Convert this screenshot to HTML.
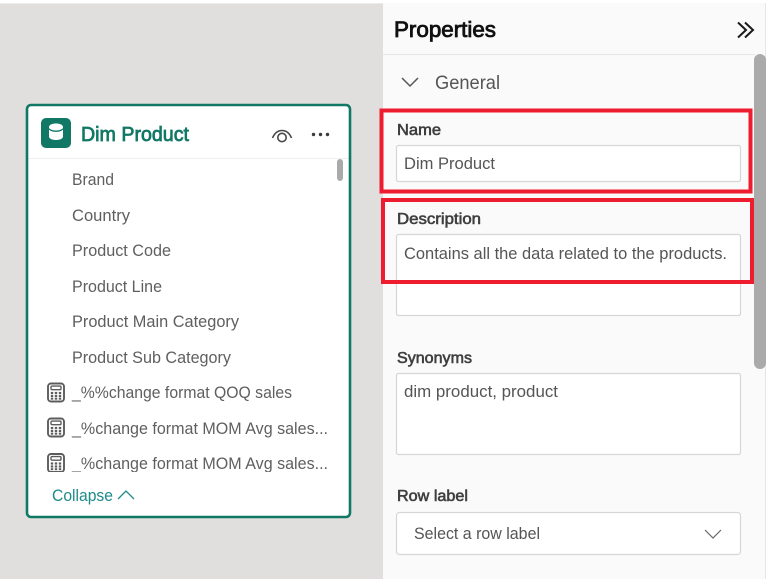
<!DOCTYPE html>
<html><head><meta charset="utf-8"><style>
html,body{margin:0;padding:0;background:#e1dfdd}
svg{display:block}
text{font-family:"Liberation Sans",sans-serif}
.i{font-size:16.5px;fill:#5f5f5f}
.l{font-size:16px;fill:#3f3f3f;stroke:#3f3f3f;stroke-width:.6px}
.v{font-size:16.5px;fill:#555}
.b{fill:#fff;stroke:#d6d6d6;stroke-width:1.2}
</style></head><body>
<svg width="768" height="579" viewBox="0 0 768 579" xmlns="http://www.w3.org/2000/svg">
<defs>
<g id="c"><rect x="1" y="1" width="16" height="18" rx="3" fill="#fff" stroke="#5c5c5c" stroke-width="1.900"/><rect x="4" y="3.600" width="10" height="3.600" rx="1" fill="none" stroke="#5c5c5c" stroke-width="1.400"/><g fill="#5c5c5c"><rect x="3.800" y="9.400" width="2.400" height="2.200"/><rect x="7.800" y="9.400" width="2.400" height="2.200"/><rect x="11.800" y="9.400" width="2.400" height="2.200"/><rect x="3.800" y="12.400" width="2.400" height="2.200"/><rect x="7.800" y="12.400" width="2.400" height="2.200"/><rect x="11.800" y="12.400" width="2.400" height="2.200"/><rect x="3.800" y="15.200" width="2.400" height="2"/><rect x="7.800" y="15.200" width="2.400" height="2"/><rect x="11.800" y="15.200" width="2.400" height="2"/></g></g>
</defs>
<rect width="768" height="579" fill="#e1dfdd"/>
<rect width="768" height="3" fill="#fff"/>
<rect y="3" width="768" height="1" fill="#ececec"/>
<!-- panel -->
<rect x="383" y="3" width="382" height="576" fill="#fafafa"/>
<rect x="765" y="3" width="1" height="576" fill="#e6e6e6"/>
<rect x="766" y="3" width="2" height="576" fill="#fff"/>
<rect x="383" y="54" width="372" height="1" fill="#e6e6e6"/>
<text x="394" y="37" font-size="22.500" fill="#111" stroke="#111" stroke-width=".85" textLength="102" lengthAdjust="spacingAndGlyphs">Properties</text>
<path d="M738 22.500l8 7.500-8 7.500M745 22.500l8 7.500-8 7.500" fill="none" stroke="#1a1a1a" stroke-width="2"/>
<rect x="754" y="54" width="12" height="315" rx="6" fill="#aaa"/>
<path d="M402 78l8 8 8-8" fill="none" stroke="#555" stroke-width="1.500"/>
<text x="435" y="89" font-size="19.500" fill="#555" textLength="65" lengthAdjust="spacingAndGlyphs">General</text>
<!-- fields -->
<text class="l" x="397" y="135" textLength="44" lengthAdjust="spacingAndGlyphs">Name</text>
<rect class="b" x="396.500" y="145.500" width="344" height="36" rx="2"/>
<text class="v" x="404" y="169" textLength="91" lengthAdjust="spacingAndGlyphs">Dim Product</text>
<text class="l" x="397" y="224" textLength="84" lengthAdjust="spacingAndGlyphs">Description</text>
<rect class="b" x="396.500" y="234.500" width="344" height="81" rx="2"/>
<text class="v" x="404" y="259" textLength="323" lengthAdjust="spacingAndGlyphs">Contains all the data related to the products.</text>
<text class="l" x="397" y="363" textLength="75" lengthAdjust="spacingAndGlyphs">Synonyms</text>
<rect class="b" x="396.500" y="373.500" width="344" height="81" rx="2"/>
<text class="v" x="404" y="397" textLength="154" lengthAdjust="spacingAndGlyphs">dim product, product</text>
<text class="l" x="397" y="501" textLength="71" lengthAdjust="spacingAndGlyphs">Row label</text>
<rect class="b" x="396.500" y="512.500" width="344" height="42" rx="3"/>
<text class="v" x="414" y="539" textLength="126" lengthAdjust="spacingAndGlyphs">Select a row label</text>
<path d="M705 530l8 8 8-8" fill="none" stroke="#666" stroke-width="1.200"/>
<!-- red -->
<rect x="381.500" y="110.500" width="369" height="81" fill="none" stroke="#ed1c2e" stroke-width="4"/>
<rect x="383" y="200" width="369" height="82" fill="none" stroke="#ed1c2e" stroke-width="4"/>
<!-- card -->
<rect x="27" y="105" width="323" height="412" rx="4" fill="#fff" stroke="#117865" stroke-width="2.600"/>
<rect x="28.500" y="158" width="320" height="1" fill="#efefef"/>
<rect x="41" y="118" width="30" height="30" rx="5" fill="#117865"/>
<path d="M49 127c0-2.300 3.500-3.500 7-3.500s7 1.200 7 3.500v9.500c0 2.300-3.500 3.500-7 3.500s-7-1.200-7-3.500z" fill="#fff"/>
<path d="M49 128.800c1.500 1.600 4 2.400 7 2.400s5.500-.8 7-2.400" fill="none" stroke="#117865" stroke-width="1.400"/>
<text x="81" y="141" font-size="20" fill="#117865" stroke="#117865" stroke-width=".75" textLength="108" lengthAdjust="spacingAndGlyphs">Dim Product</text>
<path d="M272.500 138c2-4.800 5.500-7.500 9.500-7.500s7.500 2.700 9.500 7.500" fill="none" stroke="#484848" stroke-width="1.600"/>
<circle cx="282" cy="137.500" r="4.200" fill="none" stroke="#484848" stroke-width="1.600"/>
<g fill="#3c3c3c"><circle cx="313.500" cy="134.500" r="1.700"/><circle cx="320.500" cy="134.500" r="1.700"/><circle cx="327.500" cy="134.500" r="1.700"/></g>
<rect x="337" y="159" width="6" height="22" rx="3" fill="#aaa"/>
<text class="i" x="72" y="185" textLength="42" lengthAdjust="spacingAndGlyphs">Brand</text>
<text class="i" x="72" y="221" textLength="58" lengthAdjust="spacingAndGlyphs">Country</text>
<text class="i" x="72" y="256" textLength="99" lengthAdjust="spacingAndGlyphs">Product Code</text>
<text class="i" x="72" y="292" textLength="90" lengthAdjust="spacingAndGlyphs">Product Line</text>
<text class="i" x="72" y="327" textLength="167" lengthAdjust="spacingAndGlyphs">Product Main Category</text>
<text class="i" x="72" y="363" textLength="159" lengthAdjust="spacingAndGlyphs">Product Sub Category</text>
<use href="#c" x="47" y="382.500"/>
<text class="i" x="72" y="398" textLength="220" lengthAdjust="spacingAndGlyphs">_%%change format QOQ sales</text>
<use href="#c" x="47" y="417.500"/>
<text class="i" x="72" y="434" textLength="256" lengthAdjust="spacingAndGlyphs">_%change format MOM Avg sales...</text>
<use href="#c" x="47" y="453"/>
<text class="i" x="72" y="469" textLength="256" lengthAdjust="spacingAndGlyphs">_%change format MOM Avg sales...</text>
<rect x="28.500" y="472" width="320" height="8" fill="#fff"/>
<text x="52" y="501" font-size="16.500" fill="#1f8a8a" textLength="61" lengthAdjust="spacingAndGlyphs">Collapse</text>
<path d="M118 499l8-8 8 8" fill="none" stroke="#1f8a8a" stroke-width="1.300"/>
</svg>
</body></html>
